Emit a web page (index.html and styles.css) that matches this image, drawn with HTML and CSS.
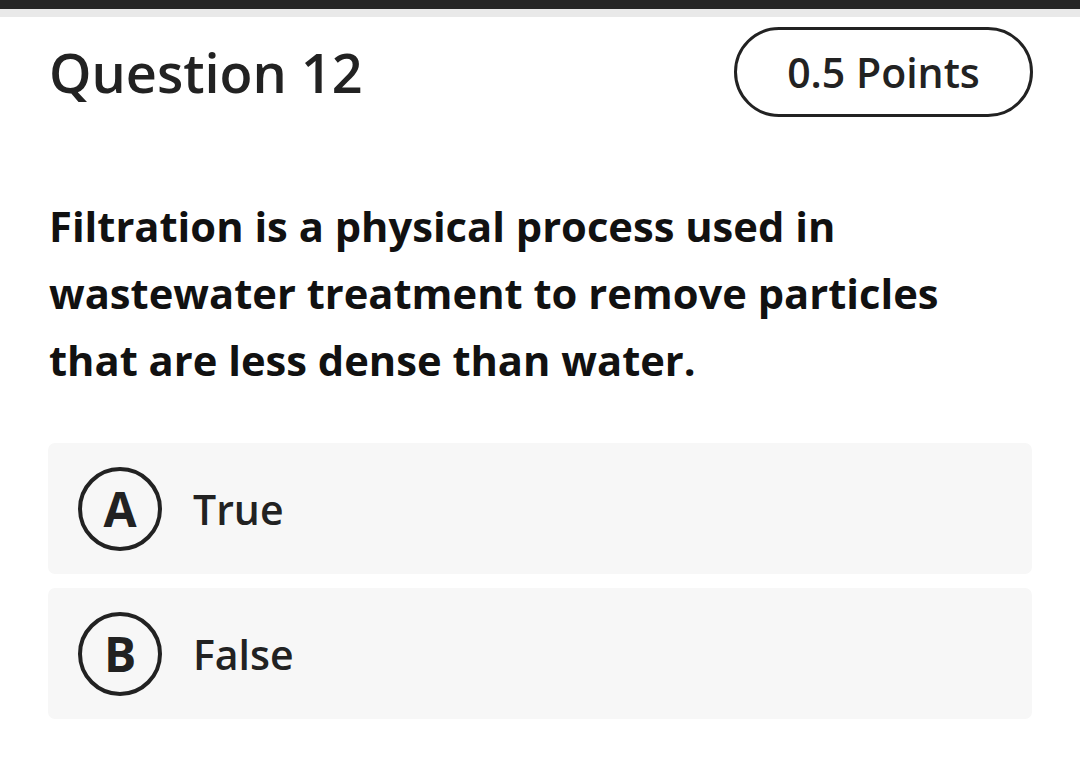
FILE: index.html
```html
<!DOCTYPE html>
<html>
<head>
<meta charset="utf-8">
<link rel="stylesheet" href="styles.css">
</head>
<body>
<div class="topbar"></div>
<div class="subbar"></div>
<main class="content">
  <header class="head">
    <h1 class="title">Question 12</h1>
    <div class="points">0.5 Points</div>
  </header>
  <p class="question">Filtration is a physical process used in wastewater treatment to remove particles that are less dense than water.</p>
  <div class="options">
    <div class="option">
      <span class="letter">A</span>
      <span class="label">True</span>
    </div>
    <div class="option">
      <span class="letter">B</span>
      <span class="label">False</span>
    </div>
  </div>
</main>
</body>
</html>
```
FILE: styles.css
```css
* { box-sizing: border-box; }
html, body { margin: 0; padding: 0; background: #fff; }
body {
  font-family: "Open Sans", "Liberation Sans", sans-serif;
  color: #222;
  width: 1080px;
  height: 762px;
  overflow: hidden;
}
.topbar { height: 9px; background: #262626; }
.subbar { height: 8px; background: #e9e9e9; }
.content { padding: 0 48px 0 48px; }
.head {
  display: flex;
  justify-content: space-between;
  align-items: center;
  margin-top: 10px;
  height: 90px;
}
.title {
  margin: 0;
  font-size: 54px;
  font-weight: 600;
  color: #222;
  padding-left: 1px;
}
.points {
  width: 299px;
  height: 90px;
  margin-right: -1px;
  border: 3px solid #222;
  border-radius: 45px;
  display: flex;
  align-items: center;
  justify-content: center;
  font-size: 41px;
  font-weight: 600;
  color: #222;
}
.question {
  margin: 75px 0 0 0;
  font-size: 41.7px;
  font-weight: 700;
  line-height: 67px;
  color: #111;
  width: 910px;
  padding-left: 1px;
}
.options {
  margin-top: 50px;
  display: flex;
  flex-direction: column;
  gap: 14px;
}
.option {
  height: 131px;
  background: #f7f7f7;
  border-radius: 7px;
  display: flex;
  align-items: center;
  padding-left: 30px;
}
.letter {
  width: 84px;
  height: 84px;
  border: 4.5px solid #222;
  border-radius: 50%;
  display: flex;
  align-items: center;
  justify-content: center;
  font-size: 48px;
  font-weight: 700;
  color: #222;
  flex: none;
}
.label {
  margin-left: 31px;
  font-size: 41px;
  font-weight: 600;
  color: #222;
}
```
